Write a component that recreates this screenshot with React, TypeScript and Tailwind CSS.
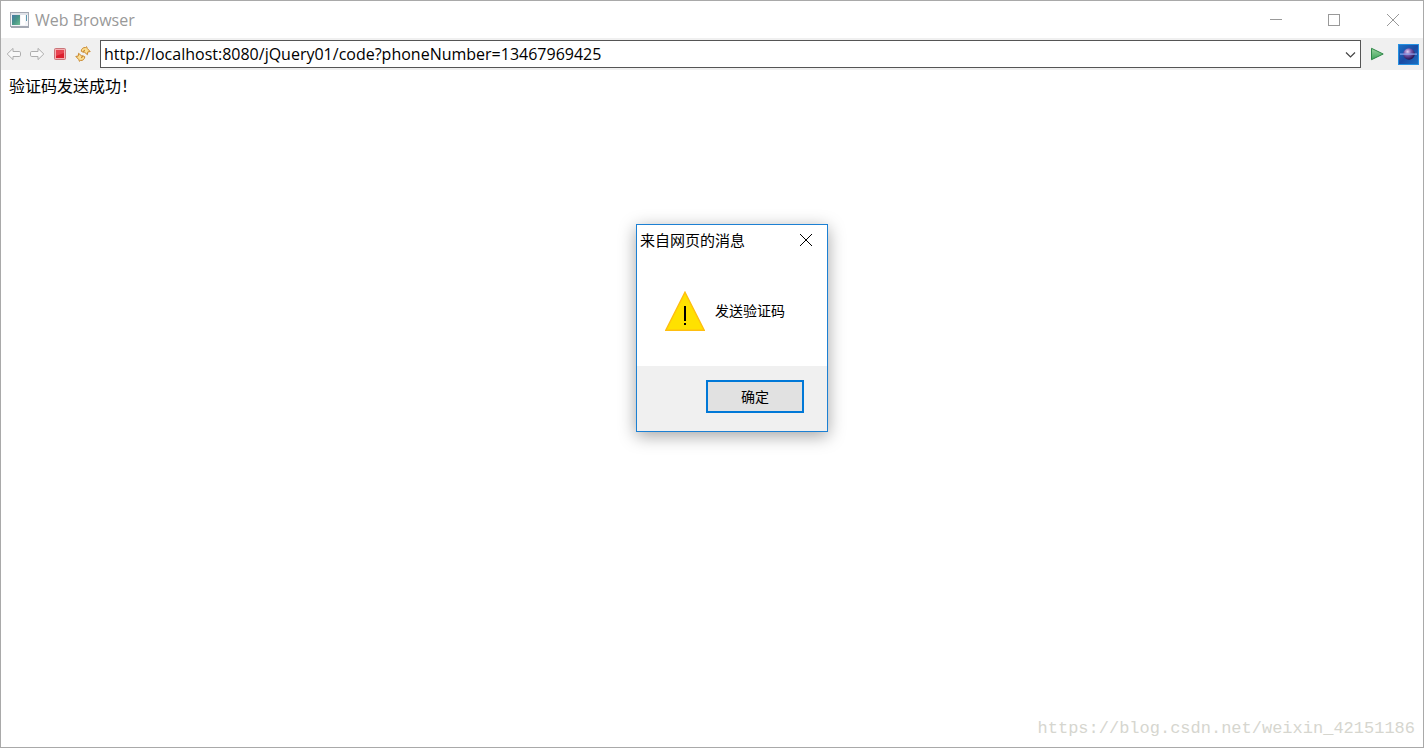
import { useState } from "react";

function AppIcon() {
  return (
    <svg width="20" height="16" viewBox="0 0 20 16" aria-hidden="true" shapeRendering="crispEdges">
      <rect x="0.5" y="0.5" width="18" height="14" fill="#f4f5f8" stroke="#a3a8b2" />
      <rect x="1" y="1" width="17" height="2" fill="#dfe2e8" />
      <rect x="2" y="3" width="8" height="10" fill="url(#appGreen)" />
      <rect x="11" y="3" width="4" height="10" fill="#ffffff" />
      <rect x="16" y="3" width="1" height="6" fill="#5c9ab0" />
      <path d="M18.5 1v14H1" fill="none" stroke="#a3a8b2" />
      <defs>
        <linearGradient id="appGreen" x1="0" y1="0" x2="1" y2="1">
          <stop offset="0" stopColor="#4779a8" />
          <stop offset="0.5" stopColor="#479487" />
          <stop offset="1" stopColor="#6fbf93" />
        </linearGradient>
      </defs>
    </svg>
  );
}

function ArrowIcon({ flip }: { flip?: boolean }) {
  return (
    <svg width="16" height="16" viewBox="0 0 16 16" aria-hidden="true" className={flip ? "-scale-x-100" : ""}>
      <path
        d="M1.2 8 7 2.4v3.1h6.2q1.3 0 1.3 1.2v2.6q0 1.2-1.3 1.2H7v3.1z"
        fill="#f8f8f8"
        stroke="#adadad"
        strokeLinejoin="round"
      />
    </svg>
  );
}

function StopIcon() {
  return (
    <svg width="12" height="12" viewBox="0 0 12 12" aria-hidden="true">
      <rect x="0.5" y="0.5" width="11" height="11" rx="1" fill="#f5aeb1" stroke="#c97579" />
      <rect x="2" y="2" width="8" height="8" fill="#dc1e2d" />
      <path d="M2 2h8v3L2 8z" fill="#e84350" />
    </svg>
  );
}

function RefreshIcon() {
  return (
    <svg width="16" height="16" viewBox="0 0 16 16" aria-hidden="true">
      <g fill="#fbdf94" stroke="#c9872c" strokeWidth="1" strokeLinejoin="round">
        <path d="M6.2 5.2C6.4 2.8 8.2 1.2 10.4 1.6L11.6.7l.6 1.700L15.200 5.600l-2.400.3-.4 2.800-4-3.500 1.500-.8C9 4.200 8.600 5 8.500 6.400z" />
        <path d="M9.800 10.800C9.600 13.200 7.800 14.800 5.600 14.400l-1.200.9-.6-1.700L.8 10.400l2.400-.3.4-2.800 4 3.500-1.500.8c.9.200 1.300-.6 1.400-2z" />
      </g>
    </svg>
  );
}

function GoIcon() {
  return (
    <svg width="14" height="14" viewBox="0 0 14 14" aria-hidden="true">
      <path d="M1.5 1.300v11.400L13.200 7z" fill="url(#goGreen)" stroke="#2f8748" strokeLinejoin="round" />
      <defs>
        <linearGradient id="goGreen" x1="0" y1="0" x2="0" y2="1">
          <stop offset="0" stopColor="#9bd39f" />
          <stop offset="1" stopColor="#3da45a" />
        </linearGradient>
      </defs>
    </svg>
  );
}

function GlobeLogo() {
  return (
    <svg width="21" height="21" viewBox="0 0 21 21" aria-hidden="true">
      <defs>
        <linearGradient id="logoSky" x1="0" y1="0" x2="1" y2="1">
          <stop offset="0" stopColor="#1b72c6" />
          <stop offset="0.5" stopColor="#1a4ba4" />
          <stop offset="1" stopColor="#1b70c2" />
        </linearGradient>
        <radialGradient id="logoBall" cx="0.38" cy="0.3" r="0.7">
          <stop offset="0" stopColor="#e0cff2" />
          <stop offset="0.45" stopColor="#7859ad" />
          <stop offset="1" stopColor="#25104f" />
        </radialGradient>
      </defs>
      <rect x="0.5" y="0.5" width="20" height="20" fill="url(#logoSky)" stroke="#2590e2" />
      <circle cx="11" cy="10" r="5.8" fill="url(#logoBall)" />
      <path d="M2 9.5h17v1.200H2z" fill="#8ba6ee" />
    </svg>
  );
}

function WarningIcon() {
  return (
    <svg width="40" height="40" viewBox="0 0 40 40" role="img" aria-label="警告">
      <path d="M20 1.2 39.2 39.3H.8z" fill="#ffe100" stroke="#ffbe10" strokeWidth="1.4" />
      <path d="M19 15h2v15h-2zM19 32h2v2h-2z" fill="#000" />
    </svg>
  );
}

function CloseIcon() {
  return (
    <svg width="12" height="12" viewBox="0 0 12 12" aria-hidden="true">
      <path d="m0 0 12 12M12 0 0 12" stroke="currentColor" strokeWidth="1" />
    </svg>
  );
}

function MessageDialog({ onClose }: { onClose: () => void }) {
  return (
    <div
      role="dialog"
      aria-labelledby="dialog-title"
      className="absolute top-[223px] left-[635px] flex w-48 flex-col border border-[#1c80d3] bg-white text-black shadow-[0_4px_16px_rgba(0,0,0,0.36)]"
    >
      <div className="flex h-[30px] items-center justify-between pr-[15px] pl-[3px]">
        <h2 id="dialog-title" className="text-[15px] leading-5">来自网页的消息</h2>
        <button type="button" aria-label="关闭" onClick={onClose}>
          <CloseIcon />
        </button>
      </div>
      <div className="flex items-center gap-2.5 pt-9 pb-[35px] pl-7">
        <WarningIcon />
        <p className="text-sm">发送验证码</p>
      </div>
      <div className="flex justify-end bg-[#f0f0f0] pt-3.5 pr-[23px] pb-[18px]">
        <button
          type="button"
          onClick={onClose}
          className="h-[33px] w-[98px] border-2 border-[#0078d7] bg-[#e1e1e1] text-sm"
        >
          确定
        </button>
      </div>
    </div>
  );
}

export default function App() {
  const [url, setUrl] = useState("http://localhost:8080/jQuery01/code?phoneNumber=13467969425");
  const [open, setOpen] = useState(true);

  return (
    <div className="relative flex min-h-screen flex-col border border-[#a9a9a9] bg-white font-['Open_Sans','Noto_Sans_CJK_SC',sans-serif] text-black">
      <header className="flex h-[37px] items-center gap-[5px] pl-[9px] text-[#999999]">
        <AppIcon />
        <h1 className="flex-1 text-base">Web Browser</h1>
        <div className="flex h-full">
          <button type="button" aria-label="Minimize" className="grid w-[58px] place-items-center">
            <span className="h-px w-3 bg-[#999999]" />
          </button>
          <button type="button" aria-label="Maximize" className="grid w-[58px] place-items-center">
            <span className="size-3 border border-[#999999]" />
          </button>
          <button type="button" aria-label="Close" className="grid w-[60px] place-items-center">
            <CloseIcon />
          </button>
        </div>
      </header>

      <nav className="flex h-8 items-center bg-[#f0f0f0] pr-1 pl-[5px]">
        <div className="flex items-center gap-[7px] pr-[9px]">
          <button type="button" aria-label="Back">
            <ArrowIcon />
          </button>
          <button type="button" aria-label="Forward">
            <ArrowIcon flip />
          </button>
          <button type="button" aria-label="Stop" className="px-0.5">
            <StopIcon />
          </button>
          <button type="button" aria-label="Refresh">
            <RefreshIcon />
          </button>
        </div>
        <div className="flex h-7 flex-1 items-center border border-[#555555] bg-white">
          <input
            type="text"
            aria-label="Address"
            value={url}
            onChange={(e) => setUrl(e.target.value)}
            className="h-full min-w-0 flex-1 pl-[3px] text-base outline-none"
          />
          <button type="button" aria-label="Show addresses" className="px-1">
            <svg width="11" height="11" viewBox="0 0 11 11" aria-hidden="true">
              <path d="M1 3.5 5.5 8 10 3.5" fill="none" stroke="#444" strokeWidth="1.2" />
            </svg>
          </button>
        </div>
        <div className="flex items-center gap-3.5 pl-[9px]">
          <button type="button" aria-label="Go">
            <GoIcon />
          </button>
          <GlobeLogo />
        </div>
      </nav>

      <main className="flex-1 px-2 pt-1">
        <p className="text-base">验证码发送成功！</p>
      </main>

      <footer className="flex justify-end px-2 pb-1.5 font-['Liberation_Mono',monospace] text-[17px] text-[#d6d6cf]">
        https://blog.csdn.net/weixin_42151186
      </footer>

      {open && <MessageDialog onClose={() => setOpen(false)} />}
    </div>
  );
}
